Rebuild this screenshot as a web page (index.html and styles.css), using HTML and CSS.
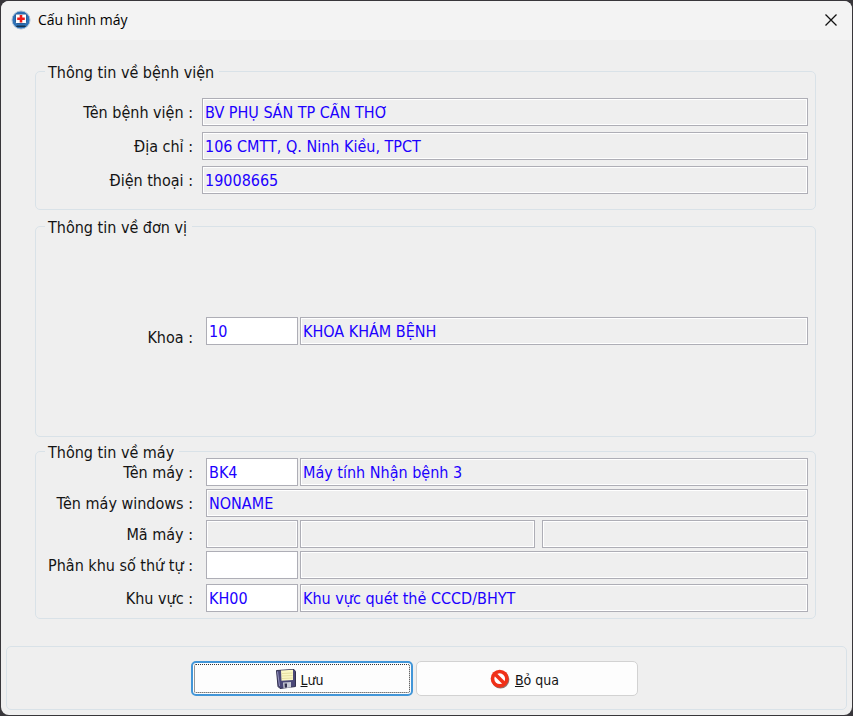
FILE: index.html
```html
<!DOCTYPE html>
<html lang="vi">
<head>
<meta charset="utf-8">
<meta name="viewport" content="width=device-width, initial-scale=1">
<title>Cấu hình máy</title>
<link rel="stylesheet" href="styles.css">
</head>
<body>
<main class="window">
  <header class="titlebar">
    <svg class="app-icon" viewBox="0 0 20 20" aria-hidden="true">
      <circle cx="10" cy="10" r="9" fill="#2d72b8" stroke="#a9bdd2"/>
      <path d="M6 15.500h8l1 1.500h-10z" fill="#16324f"/>
      <rect x="4.500" y="4" width="11" height="9.500" rx="1" fill="#fff" stroke="#2a5f9a"/>
      <path d="M10 5v7.500M6.200 8.800h7.600" stroke="#f01818" stroke-width="2.600"/>
    </svg>
    <h1 class="title">Cấu hình máy</h1>
    <button class="close" type="button" aria-label="Đóng">
      <svg viewBox="0 0 12 12" width="12" height="12"><path d="M.5.5l11 11M11.500.5l-11 11" stroke="#111" stroke-width="1.300"/></svg>
    </button>
  </header>
  <form class="form">
    <div class="groups">
      <fieldset class="group hospital">
        <legend>Thông tin về bệnh viện</legend>
        <div class="rows">
          <div class="row"><label for="hospital">Tên bệnh viện :</label><input id="hospital" readonly value="BV PHỤ SẢN TP CẦN THƠ"></div>
          <div class="row"><label for="address">Địa chỉ :</label><input id="address" readonly value="106 CMTT, Q. Ninh Kiều, TPCT"></div>
          <div class="row"><label for="phone">Điện thoại :</label><input id="phone" readonly value="19008665"></div>
        </div>
      </fieldset>
      <fieldset class="group unit">
        <legend>Thông tin về đơn vị</legend>
        <div class="rows">
          <div class="row"><label for="dept">Khoa :</label><input id="dept" class="code" value="10"><input readonly aria-label="Tên khoa" value="KHOA KHÁM BỆNH"></div>
        </div>
      </fieldset>
      <fieldset class="group machine">
        <legend>Thông tin về máy</legend>
        <div class="rows">
          <div class="row"><label for="machine">Tên máy :</label><input id="machine" class="code" value="BK4"><input readonly aria-label="Mô tả máy" value="Máy tính Nhận bệnh 3"></div>
          <div class="row"><label for="windows">Tên máy windows :</label><input id="windows" readonly value="NONAME"></div>
          <div class="row"><label for="mid">Mã máy :</label><input id="mid" class="code" readonly><input class="mid-name" readonly aria-label="Mã máy 2"><input class="mid-extra" readonly aria-label="Mã máy 3"></div>
          <div class="row"><label for="queue">Phân khu số thứ tự :</label><input id="queue" class="code"><input readonly aria-label="Tên phân khu"></div>
          <div class="row area"><label for="area">Khu vực :</label><input id="area" class="code" value="KH00"><input readonly aria-label="Tên khu vực" value="Khu vực quét thẻ CCCD/BHYT"></div>
        </div>
      </fieldset>
    </div>
    <footer class="actions">
      <button class="btn primary" type="button">
        <svg class="icon" viewBox="0 0 20 20" aria-hidden="true">
          <path d="M.5 1.500L18 .5l1.500 2v15L4 19.500l-2-2z" fill="#4b4878" stroke="#33314f"/>
          <path d="M1.500 2.500l2 14.500" stroke="#9694c0"/>
          <path d="M5 1.500l12-.7v10.200l-11.500.8z" fill="#fbf8c5"/>
          <path d="M6 4.500l10.500-.5M6 7l10.500-.5M6 9.500l10.500-.5" stroke="#e6dfa0"/>
          <path d="M7 13.500l8-.6v5.600l-7.500.8z" fill="#c9cbd6"/>
          <path d="M8.500 14.500h2.500v4l-2.200.2z" fill="#33314f"/>
        </svg>
        <span><u>L</u>ưu</span>
      </button>
      <button class="btn" type="button">
        <svg class="icon" viewBox="0 0 20 20" aria-hidden="true">
          <circle cx="10.500" cy="10.700" r="8.800" fill="#8d7470"/>
          <circle cx="9.700" cy="9.700" r="9" fill="#f03018"/>
          <circle cx="9.700" cy="9.700" r="5.400" fill="#fff"/>
          <path d="M5.500 5.500l8.400 8.400" stroke="#f03018" stroke-width="3.600"/>
        </svg>
        <span><u>B</u>ỏ qua</span>
      </button>
    </footer>
  </form>
</main>
</body>
</html>
```

FILE: styles.css
```css
* { box-sizing: border-box; }

body {
  margin: 0;
  min-height: 100vh;
  padding: 1px;
  display: flex;
  background: #38363a;
  color: #141414;
  font: 16px/20px "DejaVu Sans Condensed", "Noto Sans", sans-serif;
}

.window {
  flex: 1;
  display: flex;
  flex-direction: column;
  background: #efefef;
  border-radius: 8px;
  overflow: hidden;
}

.titlebar {
  display: flex;
  align-items: center;
  height: 39px;
  padding: 0 15px 2px 10px;
  gap: 7px;
  background: #f3f3f3;
}

.app-icon { width: 20px; height: 20px; }

.title {
  flex: 1;
  margin: 0;
  font: 14px/20px "Open Sans", "Noto Sans", sans-serif;
  color: #000;
}

.close {
  display: flex;
  padding: 0;
  border: 0;
  background: none;
}

.form {
  flex: 1;
  display: flex;
  flex-direction: column;
}

.groups { padding: 20px 36px 0 34px; }

.group {
  min-width: 0;
  margin: 0 0 5px;
  padding: 0 7px 0 0;
  border: 1px solid #d9e2e8;
  border-radius: 5px;
}

.unit { margin-bottom: 3px; }
.machine { margin: 0; }

legend {
  margin-left: 9px;
  padding: 3px 5px 0 3px;
}

.rows {
  display: flex;
  flex-direction: column;
}

.hospital .rows { gap: 6px; padding: 15px 0; }
.unit .rows { padding: 76px 0 88px; }
.machine .rows { gap: 3px; margin-top: -5px; padding-bottom: 6px; }
.machine .area { margin-top: 2px; }

.row {
  display: flex;
  align-items: center;
  gap: 2px;
}

label {
  flex: none;
  width: 157px;
  margin-right: 11px;
  padding-top: 2px;
  text-align: right;
}

.hospital label { margin-right: 7px; }
.unit label { padding-top: 14px; }

input {
  flex: 1;
  min-width: 0;
  height: 28px;
  padding: 0 2px;
  border: 1px solid #aeaeb6;
  border-radius: 0;
  background: #fff;
  box-shadow: inset 0 0 0 1px #fff;
  color: #1c00ff;
  font: inherit;
  outline: none;
}

input:read-only { background: #efefef; }

.code { flex: none; width: 92px; }
.mid-name { flex: 234; margin-right: 5px; }
.mid-extra { flex: 266; }

.actions {
  display: flex;
  justify-content: center;
  gap: 3px;
  margin: auto 5px 5px;
  padding: 14px 24px 13px 0;
  border: 1px solid #d9e2e8;
  border-radius: 5px;
}

.btn {
  display: flex;
  align-items: center;
  justify-content: center;
  gap: 5px;
  width: 222px;
  height: 35px;
  padding: 0 5px 0 0;
  border: 1px solid #d2d2d2;
  border-radius: 5px;
  background: #fdfdfd;
  color: #141414;
  font: 14px/20px "DejaVu Sans Condensed", "Noto Sans", sans-serif;
}

.btn.primary {
  border: 2px solid #4296d8;
  outline: 1px dotted #333;
  outline-offset: -4px;
}

.btn span { padding-top: 3px; }

.icon { width: 20px; height: 20px; }
```
